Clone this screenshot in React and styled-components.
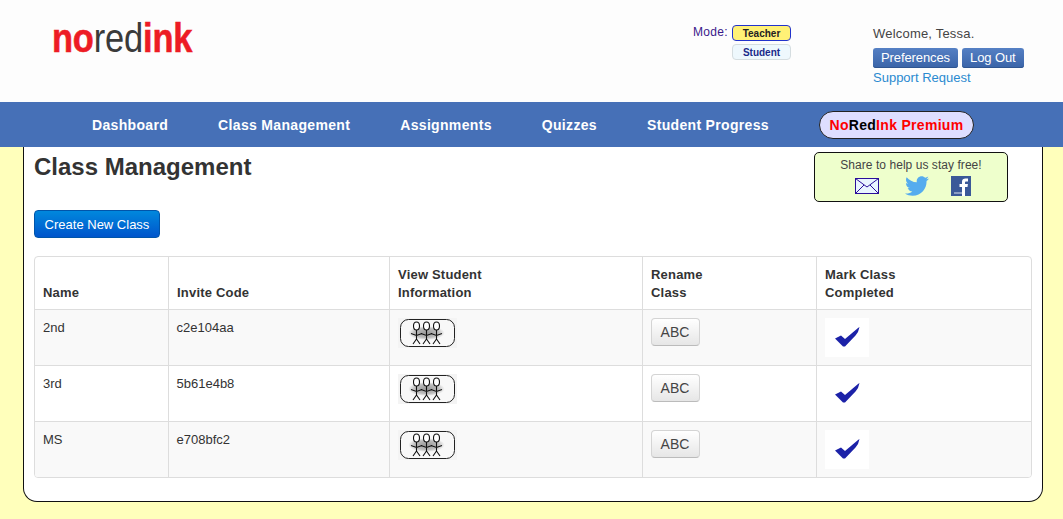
import React from "react";
import styled, { createGlobalStyle } from "styled-components";
import { FaTwitter } from "react-icons/fa";

const Global = createGlobalStyle`
  html, body { margin: 0; padding: 0; }
  body { background: #ffffbb; font-family: "Liberation Sans", Arial, sans-serif; color: #333; overflow: hidden; }
`;
const Page = styled.div`width: 1063px; height: 519px; overflow: hidden;`;
const Header = styled.header`
  height: 102px; background: #fdfdfd; display: flex; align-items: flex-start; position: relative;
`;
const LogoWrap = styled.div`width: 693px; padding: 16px 0 0 52px; box-sizing: border-box; flex: none;`;
const Logo = styled.div`
  font-size: 41px; line-height: 44px; letter-spacing: -.2px; color: #ed1c24; display: inline-block; font-weight: 700;
  transform: scaleX(0.84); transform-origin: left center; white-space: nowrap;
  -webkit-text-stroke: .6px #ed1c24;
  span { font-weight: 400; color: #3a3a3a; -webkit-text-stroke: 0; }
`;
const Mode = styled.div`width: 180px; flex: none; padding-top: 25px; display: flex; gap: 6px;`;
const ModeLabel = styled.div`font-size: 12px; line-height: 14px; color: #3a1a8a; letter-spacing: .3px; width: 33px;`;
const ModeCol = styled.div`display: flex; flex-direction: column; gap: 3px;`;
const ModeChip = styled.div`
  width: 57px; height: 14px; border-radius: 4px; font-size: 10px; line-height: 15px; font-weight: 700; text-align: center;
  border: 1px solid ${p => p.$on ? "#2233cc" : "#d5dde0"};
  background: ${p => p.$on ? "#fff176" : "#eef8fd"};
  color: ${p => p.$on ? "#222" : "#1a2a8a"};
`;
const User = styled.div`flex: none; padding-top: 25px;`;
const Welcome = styled.div`font-size: 13px; line-height: 15px; letter-spacing: .2px; color: #444; padding-top: 1px;`;
const UserButtons = styled.div`display: flex; gap: 4px; margin-top: 7px;`;
const UserButton = styled.div`
  height: 20px; padding: 0 8px; border-radius: 3px; font-size: 13px; line-height: 19px; color: #fff; letter-spacing: -.1px;
  background: linear-gradient(#5580c4, #3a64a8); box-shadow: inset 0 -1px 0 #2f5590;
`;
const Support = styled.div`font-size: 13px; line-height: 15px; margin-top: 2px; color: #2a8ad0;`;
const Nav = styled.nav`
  height: 45px; background: #4670b7; display: flex; align-items: center; gap: 50px; padding-left: 92px;
`;
const NavItem = styled.div`font-size: 14px; line-height: 16px; padding-top: 1px; font-weight: 700; letter-spacing: .33px; color: #fff; white-space: nowrap;`;
const Pill = styled.div`
  height: 26px; width: 153px; border: 1px solid #222; border-radius: 14px; background: #dedeff; text-align: center;
  font-size: 14px; line-height: 27px; font-weight: 700; color: #f00; white-space: nowrap; letter-spacing: .3px;
  b { color: #000; }
`;
const Panel = styled.main`
  width: 1018px; height: 354px; margin-left: 23px; background: #fff;
  border: 1px solid #111; border-top: 0; border-radius: 0 0 14px 14px;
`;
const Inner = styled.div`padding: 0 10px;`;
const TopRow = styled.div`display: flex; justify-content: space-between; align-items: flex-start; height: 63px;`;
const Title = styled.h1`margin: 6px 0 0; font-size: 24px; line-height: 28px; font-weight: 700; letter-spacing: 0; color: #333;`;
const Share = styled.div`
  width: 192px; margin: 5px 24px 0 0; border: 1px solid #111; border-radius: 5px; background: #eeffcc;
  text-align: center; font-size: 12px; line-height: 14px; padding-top: 5px; height: 43px; letter-spacing: .05px;
  color: #444;
`;
const ShareIcons = styled.div`display: flex; align-items: center; margin: 4px 0 0 40px;`;
const ShareSlot = styled.div`width: ${p => p.$width}px; height: 20px; display: flex; align-items: center; justify-content: flex-start;`;
const CreateButton = styled.div`
  width: 126px; height: 28px; border-radius: 4px; border: 1px solid #0055aa; box-sizing: border-box; text-align: center;
  font-size: 13px; line-height: 27px; color: #fff; background: linear-gradient(#0088dd, #0055cc);
`;
const TableWrap = styled.div`margin-top: 18px; width: 998px; box-sizing: border-box; border: 1px solid #ddd; border-radius: 4px; overflow: hidden;`;
const Table = styled.table`
  width: 100%; border-collapse: collapse; table-layout: fixed; font-size: 13px;
`;
const Th = styled.th`
  text-align: left; vertical-align: bottom; padding: 8px 8px 7px 8.5px; font-size: 13px; line-height: 18px; height: 52px; box-sizing: border-box;
  font-weight: 700; color: #333; letter-spacing: .2px; border-left: 1px solid #ddd; &:first-child { border-left: 0; padding-left: 8px; }
`;
const Row = styled.tr`background: ${p => p.$odd ? "#f9f9f9" : "#fff"};`;
const Td = styled.td`
  border-top: 1px solid #ddd; border-left: 1px solid #ddd; &:first-child { border-left: 0; }
  padding: 8px; height: 56px; box-sizing: border-box; vertical-align: top; font-size: 13px; line-height: 20px; color: #333;
`;
const AbcButton = styled.div`
  width: 49px; height: 28px; box-sizing: border-box; border: 1px solid #d4d4d4; border-bottom-color: #bbb; border-radius: 4px; text-align: center;
  font-size: 14px; line-height: 26px; color: #444; background: linear-gradient(#fff, #e6e6e6); letter-spacing: 0;
`;
const PeopleImage = styled.svg`display: block;`;
const CheckImage = styled.svg`display: block;`;

const Envelope = () => (
  <svg width="24" height="16" viewBox="0 0 24 16">
    <rect x=".5" y=".5" width="23" height="15" fill="#e8f4ff" stroke="#2a0e9a" />
    <path d="M.5.5 12 9 23.5.5M.5 15.5 9 7M23.5 15.5 15 7" fill="none" stroke="#2a0e9a" />
  </svg>
);
const Facebook = () => (
  <svg width="20" height="20" viewBox="0 0 20 20">
    <rect width="20" height="20" fill="#3b5998" />
    <rect x="3" y="16" width="9" height="2" fill="#8b9dc3" />
    <path d="M11 20V11H8.500V8H11V5.800C11 3.500 12.400 2.500 14.500 2.500L17 2.600V5.400H15.300C14.300 5.400 14 5.900 14 6.700V8H16.900L16.500 11H14V20Z" fill="#fff" />
  </svg>
);
const figure = (x) => (
  <g key={x} fill="none" stroke="#111" strokeWidth="1.100">
    <ellipse cx={x} cy="8" rx="3" ry="4" fill="#fff" />
    <path d={`M${x} 12V21M${x - 5.500} 15.500L${x} 17.500L${x + 5.500} 15.500M${x} 21L${x - 3.500} 26M${x} 21L${x + 3.500} 26`} />
  </g>
);
const People = () => (
  <PeopleImage width="59" height="30" viewBox="0 0 59 30">
    <defs>
      <radialGradient id="sh" cx=".5" cy=".5" r=".5">
        <stop offset="0" stopColor="#999" /><stop offset=".65" stopColor="#bbb" /><stop offset="1" stopColor="#f6f6f6" />
      </radialGradient>
    </defs>
    <rect width="59" height="30" fill="#f4f4f4" />
    <rect x="2.500" y="1.500" width="54" height="27" rx="8" fill="#f8f8f8" stroke="#222" />
    <ellipse cx="28.500" cy="15" rx="18" ry="7" fill="url(#sh)" />
    {[18.5, 28.5, 38.5].map(figure)}
  </PeopleImage>
);
const Check = ({ white }) => (
  <CheckImage width="44" height="39" viewBox="0 0 44 39">
    <rect width="44" height="39" fill={white ? "#fff" : "none"} />
    <path d="M10 20.500 16 17.500 20 21 33 10 34.500 9 33 14 30.500 17.500 20 28.500 18 28.500Z" fill="#1c22a8" />
  </CheckImage>
);

const rows = [
  { name: "2nd", code: "c2e104aa", white: true },
  { name: "3rd", code: "5b61e4b8", white: false },
  { name: "MS", code: "e708bfc2", white: true },
];

export default function App() {
  return (
    <Page>
      <Global />
      <Header>
        <LogoWrap><Logo>no<span>red</span>ink</Logo></LogoWrap>
        <Mode>
          <ModeLabel>Mode:</ModeLabel>
          <ModeCol>
            <ModeChip $on>Teacher</ModeChip>
            <ModeChip>Student</ModeChip>
          </ModeCol>
        </Mode>
        <User>
          <Welcome>Welcome, Tessa.</Welcome>
          <UserButtons><UserButton>Preferences</UserButton><UserButton>Log Out</UserButton></UserButtons>
          <Support>Support Request</Support>
        </User>
      </Header>
      <Nav>
        <NavItem>Dashboard</NavItem>
        <NavItem>Class Management</NavItem>
        <NavItem>Assignments</NavItem>
        <NavItem>Quizzes</NavItem>
        <NavItem>Student Progress</NavItem>
        <Pill>No<b>Red</b>Ink Premium</Pill>
      </Nav>
      <Panel>
        <Inner>
          <TopRow>
            <Title>Class Management</Title>
            <Share>
              Share to help us stay free!
              <ShareIcons>
                <ShareSlot $width={50}><Envelope /></ShareSlot>
                <ShareSlot $width={46}><FaTwitter size={24} color="#55acee" /></ShareSlot>
                <ShareSlot $width={20}><Facebook /></ShareSlot>
              </ShareIcons>
            </Share>
          </TopRow>
          <CreateButton>Create New Class</CreateButton>
          <TableWrap>
            <Table>
              <colgroup>
                <col style={{ width: 133 }} /><col style={{ width: 221 }} /><col style={{ width: 253 }} /><col style={{ width: 174 }} /><col />
              </colgroup>
              <thead>
                <tr>
                  <Th>Name</Th><Th>Invite Code</Th><Th>View Student<br />Information</Th><Th>Rename<br />Class</Th><Th>Mark Class<br />Completed</Th>
                </tr>
              </thead>
              <tbody>
                {rows.map((r, i) => (
                  <Row key={r.name} $odd={i % 2 === 0}>
                    <Td>{r.name}</Td>
                    <Td>{r.code}</Td>
                    <Td><People /></Td>
                    <Td><AbcButton>ABC</AbcButton></Td>
                    <Td><Check white={r.white} /></Td>
                  </Row>
                ))}
              </tbody>
            </Table>
          </TableWrap>
        </Inner>
      </Panel>
    </Page>
  );
}
